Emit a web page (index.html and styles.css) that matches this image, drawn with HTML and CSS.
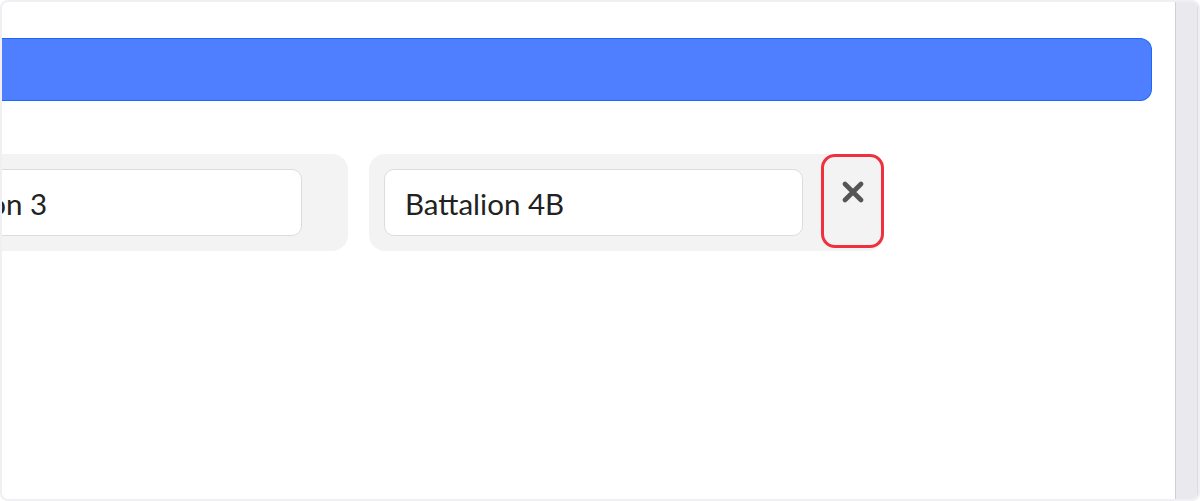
FILE: index.html
```html
<!DOCTYPE html>
<html lang="en">
<head>
<meta charset="utf-8">
<title>Battalions</title>
<link rel="stylesheet" href="styles.css">
</head>
<body>
<div class="frame">
  <div class="content">
    <div class="banner"></div>
    <div class="groups">
      <div class="group group-first">
        <div class="field"><span class="field-text">Battalion 3</span></div>
      </div>
      <div class="group">
        <div class="field"><span class="field-text">Battalion 4B</span></div>
        <button class="remove" type="button" aria-label="Remove">
          <svg width="22" height="22" viewBox="0 0 22 22" aria-hidden="true">
            <path d="M3 3 L19 19 M19 3 L3 19" stroke="#555" stroke-width="4.6" stroke-linecap="round" fill="none"/>
          </svg>
        </button>
      </div>
    </div>
  </div>
  <div class="scrollbar"></div>
</div>
</body>
</html>
```

FILE: styles.css
```css
html, body {
  margin: 0;
  padding: 0;
  background: #ffffff;
}

.frame {
  box-sizing: border-box;
  width: 1200px;
  height: 501px;
  border: 2px solid #efeff4;
  border-radius: 8px;
  overflow: hidden;
  display: flex;
  background: #ffffff;
  font-family: Lato, "Noto Sans", sans-serif;
}

.content {
  flex: 1;
  padding: 36px 23px 0 0;
  min-width: 0;
  overflow: hidden;
}

.banner {
  box-sizing: border-box;
  height: 63px;
  background: #4f7fff;
  border: 1px solid #1a68ff;
  border-left: none;
  border-radius: 0 12px 12px 0;
}

.groups {
  display: flex;
  align-items: flex-start;
  gap: 21px;
  margin-top: 53px;
  margin-left: -134px;
}

.group {
  display: flex;
  align-items: flex-start;
  background: #f3f3f3;
  border-radius: 16px;
  height: 97px;
  box-sizing: border-box;
  padding-left: 15px;
  flex: none;
}

.group-first {
  padding-right: 46px;
}

.field {
  box-sizing: border-box;
  width: 419px;
  height: 67px;
  margin-top: 15px;
  background: #ffffff;
  border: 1px solid #dcdcdc;
  border-radius: 10px;
  display: flex;
  align-items: center;
  font-size: 29.5px;
  color: #222222;
  padding-left: 20px;
  padding-top: 1px;
  white-space: nowrap;
}

.group-first .field {
  padding-left: 23px;
}

.remove {
  box-sizing: border-box;
  width: 63px;
  height: 94px;
  margin-left: 18px;
  padding: 24px 0 0;
  background: #f3f3f3;
  border: 3px solid #f0303f;
  border-radius: 14px;
  display: flex;
  justify-content: center;
  align-items: flex-start;
  cursor: pointer;
}

.remove svg {
  display: block;
}

.scrollbar {
  width: 21px;
  flex: none;
  background: #e9e9ee;
  border-left: 1px solid #cfcfd4;
  border-right: 1px solid #dcdce1;
}
```
